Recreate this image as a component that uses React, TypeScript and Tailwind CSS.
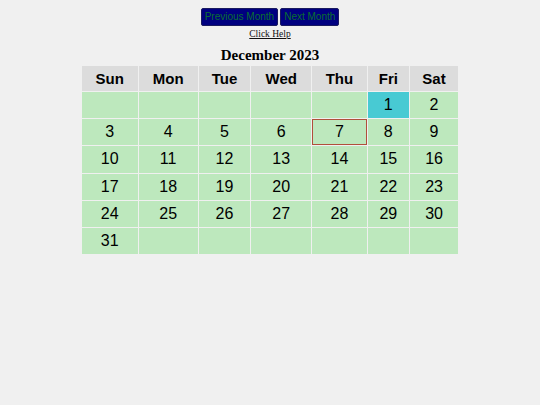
const days = ["Sun", "Mon", "Tue", "Wed", "Thu", "Fri", "Sat"];

function buildWeeks(year: number, month: number) {
  const first = new Date(year, month, 1).getDay();
  const total = new Date(year, month + 1, 0).getDate();
  const cells: (number | null)[] = [];
  for (let i = 0; i < first; i++) cells.push(null);
  for (let d = 1; d <= total; d++) cells.push(d);
  while (cells.length % 7) cells.push(null);
  const weeks: (number | null)[][] = [];
  for (let i = 0; i < cells.length; i += 7) weeks.push(cells.slice(i, i + 7));
  return weeks;
}

export default function App() {
  const weeks = buildWeeks(2023, 11);
  const selected = 1;
  const today = 7;

  return (
    <div className="min-h-screen w-full bg-[#f0f0f0] pt-2 flex flex-col items-center">
      <div className="flex gap-[2px]">
        <button className="h-[18px] px-[3px] bg-[#000080] text-[#0a7030] text-[10px] leading-none font-['Liberation_Sans',Arial,sans-serif] border border-[#1a1a60] rounded-[2px]">
          Previous Month
        </button>
        <button className="h-[18px] px-[3px] bg-[#000080] text-[#0a7030] text-[10px] leading-none font-['Liberation_Sans',Arial,sans-serif] border border-[#1a1a60] rounded-[2px]">
          Next Month
        </button>
      </div>
      <a className="mt-[2px] text-[9.5px] leading-[12px] text-[#111] underline font-['Liberation_Serif','Times_New_Roman',serif] cursor-pointer">
        Click Help
      </a>
      <table className="mt-[6px] w-[378px] border-separate border-spacing-[1px] font-['Liberation_Sans',Arial,sans-serif] text-black">
        <caption className="text-[15px] font-bold leading-[18px] pb-[1px] font-['Liberation_Serif','Times_New_Roman',serif]">
          December 2023
        </caption>
        <thead>
          <tr>
            {days.map((d) => (
              <th key={d} className="bg-[#dcdcdc] px-[4px] h-[25px] text-[15px] font-bold leading-[18px]">
                {d}
              </th>
            ))}
          </tr>
        </thead>
        <tbody>
          {weeks.map((w, i) => (
            <tr key={i}>
              {w.map((d, j) => (
                <td
                  key={j}
                  className={
                    "px-[4px] h-[26.2px] text-center text-[16px] leading-[18px] " +
                    (d === selected
                      ? "bg-[#48cad3]"
                      : d === today
                      ? "bg-[#bde8bd] border border-[#b0503a]"
                      : "bg-[#bde8bd]")
                  }
                >
                  {d ?? ""}
                </td>
              ))}
            </tr>
          ))}
        </tbody>
      </table>
    </div>
  );
}
